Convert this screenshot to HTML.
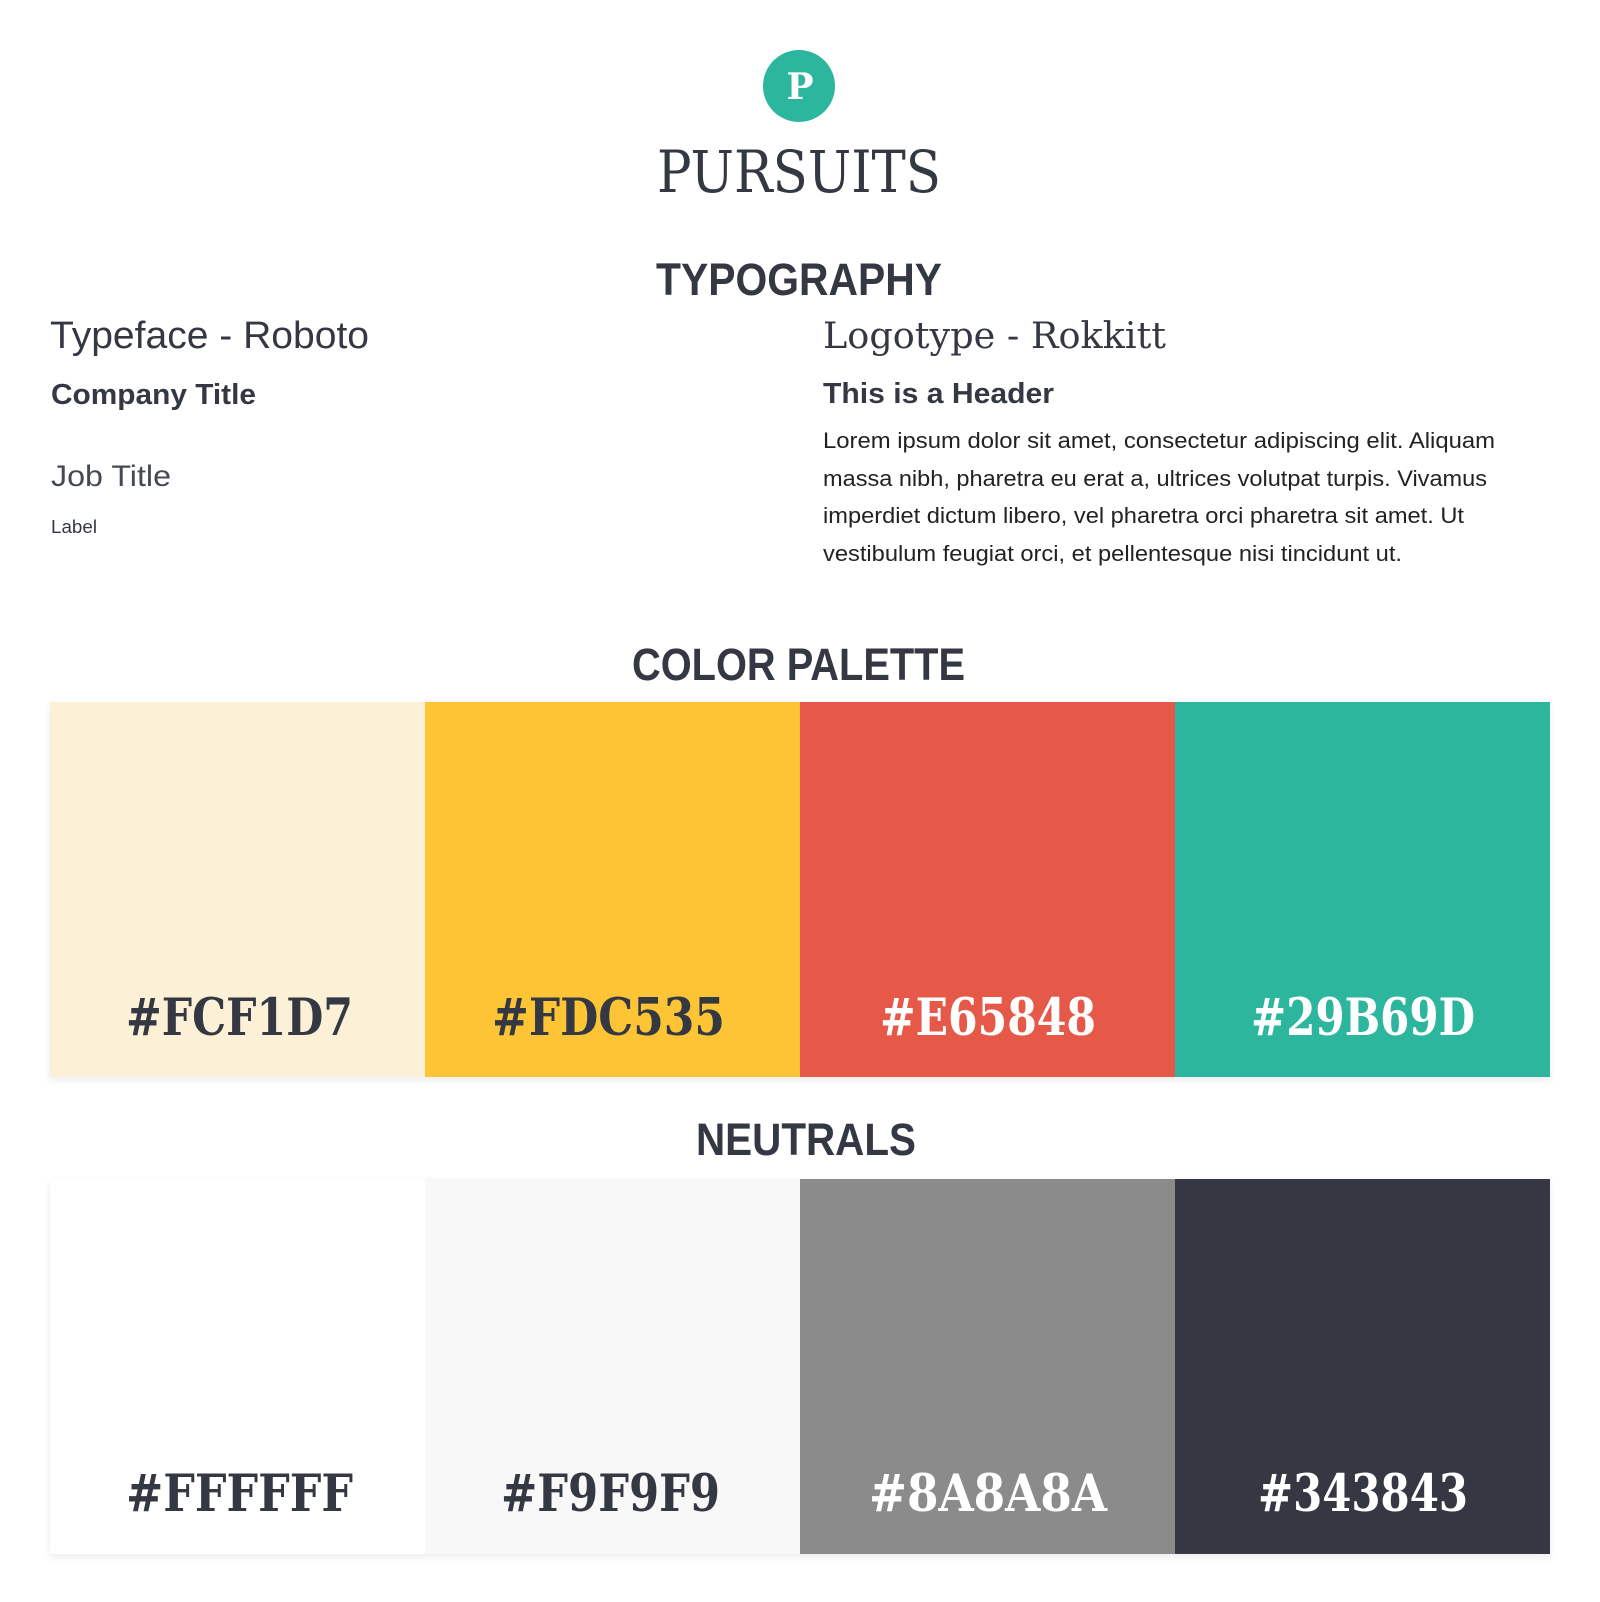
<!DOCTYPE html>
<html><head><meta charset="utf-8"><style>
html,body{margin:0;padding:0;background:#fff;width:1600px;height:1602px;overflow:hidden}
.sw{position:absolute;box-shadow:0 3px 8px rgba(0,0,0,0.08)}
svg{position:absolute;left:0;top:0}
</style></head><body>
<div class="sw" style="left:50px;top:702px;width:1500px;height:375px"></div>
<div class="sw" style="left:50px;top:1179px;width:1500px;height:375px"></div>
<svg width="1600" height="1602" viewBox="0 0 1600 1602" xmlns="http://www.w3.org/2000/svg">
<g fill="#343843">
<circle cx="799" cy="86" r="36" fill="#2bb69d"/>
<text x="800" y="99" text-anchor="middle" font-family="DejaVu Serif" font-weight="bold" font-size="36" fill="#fff">P</text>
<text x="657" y="192" textLength="284" lengthAdjust="spacingAndGlyphs" font-family="DejaVu Serif" font-size="58">PURSUITS</text>
<text x="656" y="295" textLength="286" lengthAdjust="spacingAndGlyphs" font-family="Liberation Sans" font-weight="bold" font-size="45">TYPOGRAPHY</text>
<text x="50" y="348" textLength="319" lengthAdjust="spacingAndGlyphs" font-family="Liberation Sans" font-size="38">Typeface - Roboto</text>
<text x="51" y="404" textLength="205" lengthAdjust="spacingAndGlyphs" font-family="Liberation Sans" font-weight="bold" font-size="29">Company Title</text>
<text x="51" y="486" textLength="120" lengthAdjust="spacingAndGlyphs" font-family="Liberation Sans" font-size="30" fill="#454952">Job Title</text>
<text x="51" y="533" textLength="46" lengthAdjust="spacingAndGlyphs" font-family="Liberation Sans" font-size="18">Label</text>
<text x="823" y="348" textLength="343" lengthAdjust="spacingAndGlyphs" font-family="DejaVu Serif" font-size="36">Logotype - Rokkitt</text>
<text x="823" y="403" textLength="231" lengthAdjust="spacingAndGlyphs" font-family="Liberation Sans" font-weight="bold" font-size="29">This is a Header</text>
<g font-family="Liberation Sans" font-size="22" fill="#222">
<text x="823" y="448" textLength="672" lengthAdjust="spacingAndGlyphs">Lorem ipsum dolor sit amet, consectetur adipiscing elit. Aliquam</text>
<text x="823" y="486" textLength="664" lengthAdjust="spacingAndGlyphs">massa nibh, pharetra eu erat a, ultrices volutpat turpis. Vivamus</text>
<text x="823" y="523" textLength="641" lengthAdjust="spacingAndGlyphs">imperdiet dictum libero, vel pharetra orci pharetra sit amet. Ut</text>
<text x="823" y="561" textLength="579" lengthAdjust="spacingAndGlyphs">vestibulum feugiat orci, et pellentesque nisi tincidunt ut.</text>
</g>
<text x="632" y="680" textLength="333" lengthAdjust="spacingAndGlyphs" font-family="Liberation Sans" font-weight="bold" font-size="45">COLOR PALETTE</text>
<rect x="50" y="702" width="375" height="375" fill="#fcf0d7"/>
<rect x="425" y="702" width="375" height="375" fill="#fdc535"/>
<rect x="800" y="702" width="375" height="375" fill="#e65848"/>
<rect x="1175" y="702" width="375" height="375" fill="#2bb69d"/>
<g font-family="DejaVu Serif" font-weight="bold" font-size="51">
<text x="126" y="1035" textLength="227" lengthAdjust="spacingAndGlyphs">#FCF1D7</text>
<text x="492" y="1035" textLength="233" lengthAdjust="spacingAndGlyphs">#FDC535</text>
<text x="880" y="1035" textLength="216" lengthAdjust="spacingAndGlyphs" fill="#fff">#E65848</text>
<text x="1251" y="1035" textLength="224" lengthAdjust="spacingAndGlyphs" fill="#fff">#29B69D</text>
</g>
<text x="696" y="1155" textLength="220" lengthAdjust="spacingAndGlyphs" font-family="Liberation Sans" font-weight="bold" font-size="45">NEUTRALS</text>
<rect x="50" y="1179" width="375" height="375" fill="#ffffff"/>
<rect x="425" y="1179" width="375" height="375" fill="#f8f8f8"/>
<rect x="800" y="1179" width="375" height="375" fill="#8b8b8b"/>
<rect x="1175" y="1179" width="375" height="375" fill="#353843"/>
<g font-family="DejaVu Serif" font-weight="bold" font-size="51">
<text x="126" y="1511" textLength="227" lengthAdjust="spacingAndGlyphs">#FFFFFF</text>
<text x="501" y="1511" textLength="219" lengthAdjust="spacingAndGlyphs">#F9F9F9</text>
<text x="869" y="1511" textLength="238" lengthAdjust="spacingAndGlyphs" fill="#fff">#8A8A8A</text>
<text x="1258" y="1511" textLength="210" lengthAdjust="spacingAndGlyphs" fill="#fff">#343843</text>
</g>
</g>
</svg>
</body></html>
